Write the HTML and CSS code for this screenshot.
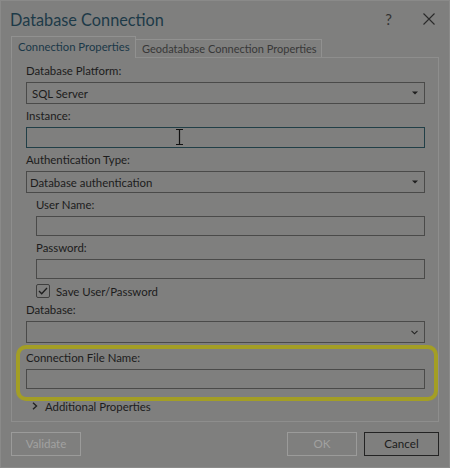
FILE: index.html
```html
<!DOCTYPE html>
<html>
<head>
<meta charset="utf-8">
<link rel="stylesheet" href="styles.css">
</head>
<body>
<div class="dialog">
  <div class="titlebar">
    <div class="title">Database Connection</div>
    <div class="title-icons">
      <span class="help">?</span>
      <svg class="close" width="12" height="12" viewBox="0 0 12 12"><path d="M0.5 0.5 L11.5 11.5 M11.5 0.5 L0.5 11.5" stroke="#2a2a2a" stroke-width="1.1" fill="none"/></svg>
    </div>
  </div>
  <div class="tabs">
    <div class="tab active">Connection Properties</div>
    <div class="tab">Geodatabase Connection Properties</div>
  </div>
  <div class="panel">
    <div class="label first">Database Platform:</div>
    <div class="select"><span>SQL Server</span><svg class="tri" width="6" height="4" viewBox="0 0 6 4"><path d="M0 0.5 H6 L3 3.5 Z" fill="#1e1e1e"/></svg></div>
    <div class="label">Instance:</div>
    <div class="input focus"><svg class="ibeam" width="7" height="16" viewBox="0 0 7 16"><path d="M0 0.5 H7 M3.5 0.5 V15.5 M0 15.5 H7" stroke="#111" stroke-width="1.2" fill="none"/></svg></div>
    <div class="label">Authentication Type:</div>
    <div class="select"><span class="tight">Database authentication</span><svg class="tri" width="6" height="4" viewBox="0 0 6 4"><path d="M0 0.5 H6 L3 3.5 Z" fill="#1e1e1e"/></svg></div>
    <div class="sub">
      <div class="label">User Name:</div>
      <div class="input"></div>
      <div class="label">Password:</div>
      <div class="input"></div>
      <div class="check-row">
        <span class="box"><svg width="10" height="8" viewBox="0 0 10 8"><path d="M1 4 L3.7 6.8 L9 1" stroke="#1e1e1e" stroke-width="1.3" fill="none"/></svg></span>
        <span>Save User/Password</span>
      </div>
    </div>
    <div class="label">Database:</div>
    <div class="select"><span></span><svg class="chev" width="7" height="5" viewBox="0 0 7 5"><path d="M0.5 0.8 L3.5 3.8 L6.5 0.8" stroke="#222" stroke-width="1.1" fill="none"/></svg></div>
    <div class="label gap">Connection File Name:</div>
    <div class="input"></div>
    <div class="more">
      <svg width="6" height="8" viewBox="0 0 6 8"><path d="M1 0.8 L4.5 4 L1 7.2" stroke="#222" stroke-width="1.4" fill="none"/></svg>
      <span>Additional Properties</span>
    </div>
  </div>
  <div class="footer">
    <div class="btn disabled">Validate</div>
    <div class="spacer"></div>
    <div class="btn disabled">OK</div>
    <div class="btn cancel">Cancel</div>
  </div>
  <div class="highlight"></div>
</div>
</body>
</html>
```
FILE: styles.css
```css
html, body {
  margin: 0;
  padding: 0;
}
* {
  box-sizing: border-box;
}
body {
  width: 450px;
  height: 468px;
  background: #7f7f7e;
  font-family: "Lato", "Open Sans", sans-serif;
  color: #1c1c1c;
  overflow: hidden;
}
.dialog {
  position: relative;
  width: 450px;
  height: 468px;
  border: 1px solid #8a8a89;
  display: flex;
  flex-direction: column;
}
.titlebar {
  height: 35px;
  display: flex;
  align-items: center;
  justify-content: space-between;
  padding: 0 14px 0 9px;
}
.title {
  font-size: 16.3px;
  color: #1d3a48;
  margin-top: 1px;
}
.title-icons {
  display: flex;
  align-items: center;
  gap: 31px;
}
.help {
  font-size: 15px;
  color: #333;
}
.close {
  display: block;
}
.tabs {
  display: flex;
  align-items: flex-end;
  margin-left: 10px;
  height: 21px;
  position: relative;
  z-index: 1;
}
.tab {
  height: 18px;
  padding: 0 6px;
  border: 1px solid #919190;
  border-bottom: none;
  font-size: 11px;
  line-height: 17px;
  color: #383838;
  width: 187px;
  white-space: nowrap;
}
.tab.active {
  height: 22px;
  line-height: 19px;
  font-size: 11.3px;
  color: #1a3848;
  width: 125px;
  padding: 0 6px;
  background: #7f7f7e;
  margin-bottom: -1px;
  margin-right: -1px;
}
.panel {
  margin: 0 10px;
  border: 1px solid #8e8e8d;
  padding: 5px 13px 7px 14px;
  display: flex;
  flex-direction: column;
}
.label {
  height: 16px;
  line-height: 16px;
  font-size: 11.4px;
  margin-top: 4px;
  margin-bottom: 3px;
  color: #1c1c1c;
  white-space: nowrap;
}
.label.first {
  margin-top: 0;
}
.label.gap {
  margin-top: 7px;
}
.select {
  height: 22px;
  border: 1px solid #4a4a49;
  display: flex;
  align-items: center;
  justify-content: space-between;
  padding: 0 6px 0 5px;
  font-size: 11.4px;
}
.select .tight {
  margin-left: -2px;
}
.tri, .chev {
  display: block;
}
.input {
  height: 20px;
  border: 1px solid #4a4a49;
  position: relative;
}
.input.focus {
  height: 21px;
  border-color: #213f47;
}
.ibeam {
  position: absolute;
  left: 149px;
  top: 1px;
}
.sub {
  margin-left: 10px;
  display: flex;
  flex-direction: column;
}
.check-row {
  display: flex;
  align-items: center;
  gap: 6px;
  margin-top: 5px;
  height: 14px;
  font-size: 11.4px;
}
.box {
  width: 14px;
  height: 14px;
  border: 1px solid #3f3f3e;
  border-radius: 2px;
  display: flex;
  align-items: center;
  justify-content: center;
}
.more {
  display: flex;
  align-items: center;
  gap: 7px;
  margin-top: 9px;
  margin-left: 6px;
  height: 16px;
  font-size: 11.4px;
}
.more svg {
  display: block;
}
.footer {
  display: flex;
  padding: 10px 10px 0 10px;
  gap: 7px;
}
.spacer {
  flex: 1;
}
.btn {
  width: 70px;
  height: 24px;
  border: 1px solid #232323;
  font-size: 11.6px;
  line-height: 22px;
  text-align: center;
}
.btn.disabled {
  border-color: #9b9b9a;
  color: #a2a2a1;
}
.btn.cancel {
  width: 75px;
}
.highlight {
  position: absolute;
  left: 15px;
  top: 344px;
  width: 422px;
  height: 56px;
  border: 4px solid #a39e25;
  border-radius: 10px;
}
```
